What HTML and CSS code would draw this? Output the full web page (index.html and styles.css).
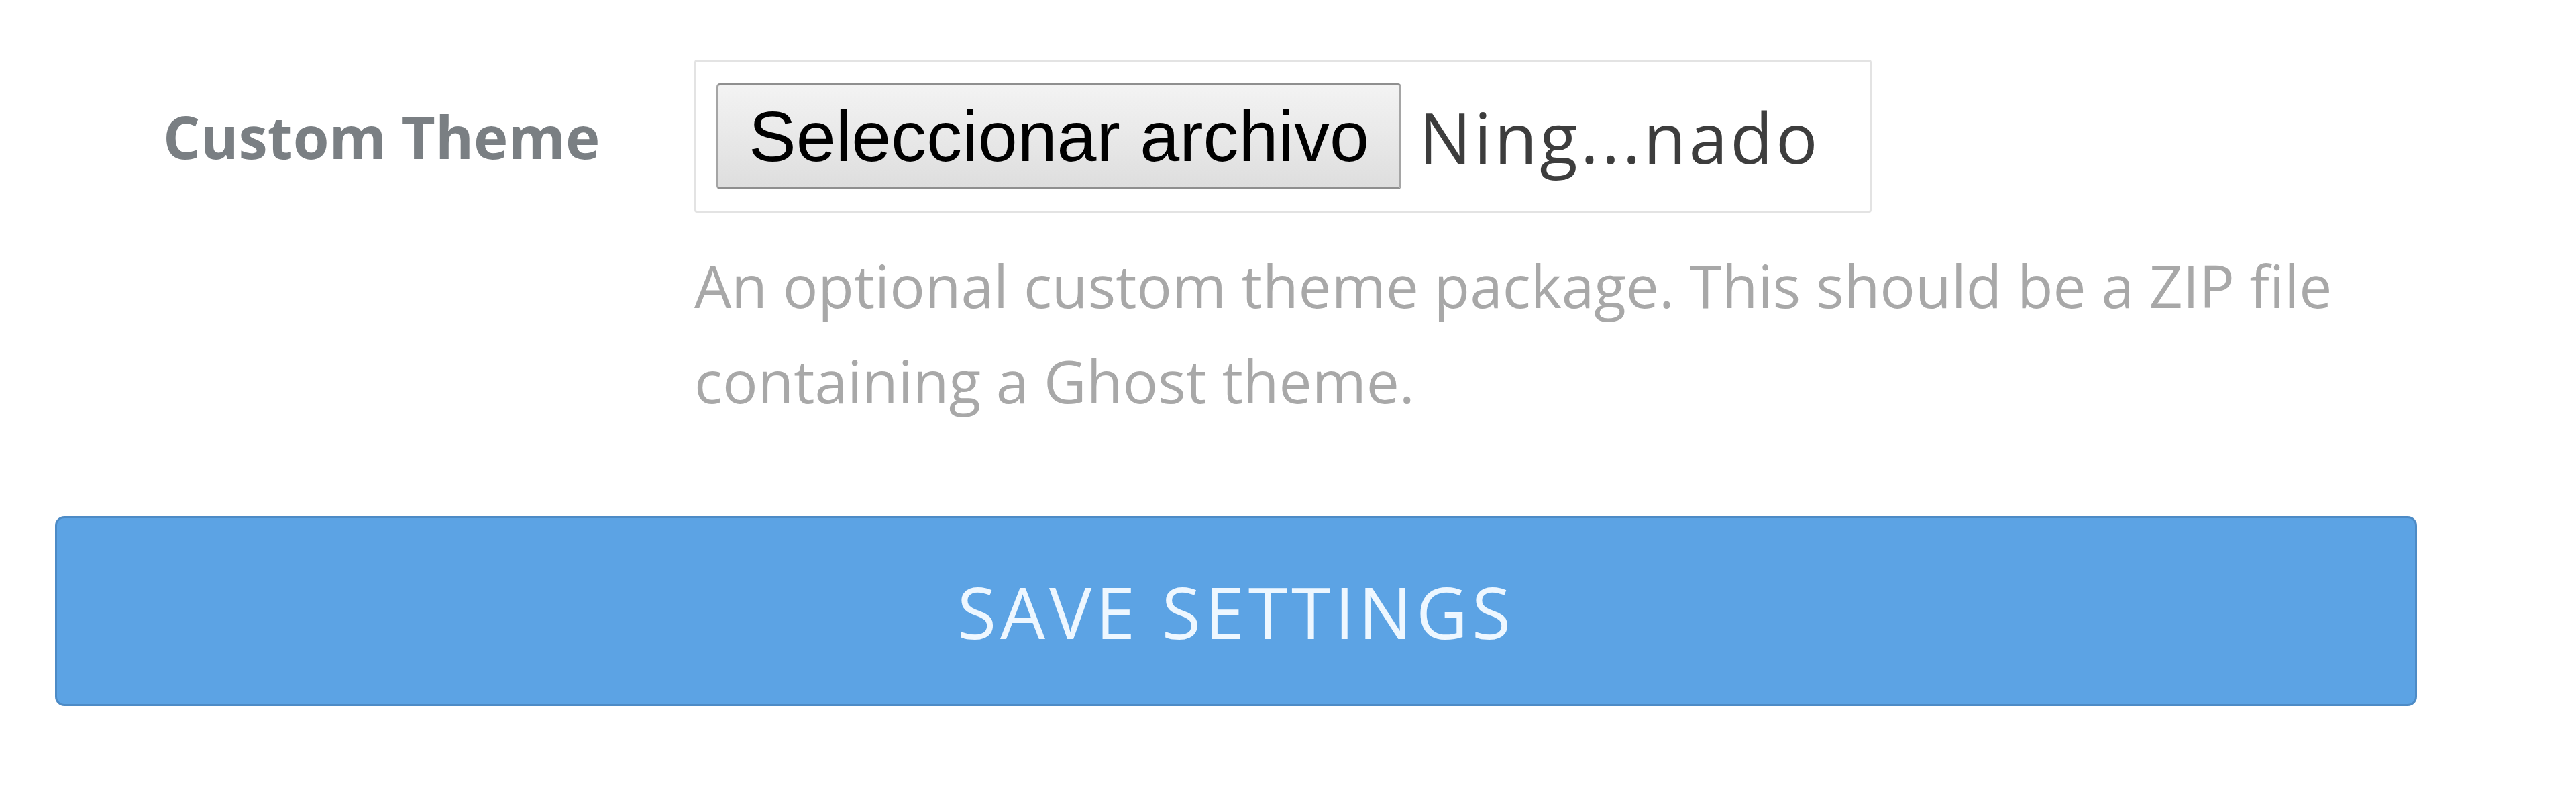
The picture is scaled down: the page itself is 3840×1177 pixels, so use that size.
FILE: index.html
```html
<!DOCTYPE html>
<html lang="en">

<head>
    <meta charset="UTF-8">
    <meta name="viewport" content="width=device-width, initial-scale=1.0">
    <title>Settings</title>
    <link rel="stylesheet" href="styles.css">
</head>

<body>
    <form class="settings">
        <div class="form-group">
            <label class="form-label" for="themeFile">Custom Theme</label>
            <div class="form-field">
                <div class="file-box">
                    <button type="button" class="file-btn">Seleccionar archivo</button>
                    <span class="file-name">Ning...nado</span>
                </div>
                <p class="help">An optional custom theme package. This should be a ZIP file containing a Ghost theme.</p>
            </div>
        </div>
        <button type="button" class="save-btn">Save Settings</button>
    </form>
</body>

</html>
```
FILE: styles.css
```css
body {
    font-family: "Open Sans", sans-serif;
    background-color: #fff;
    margin: 0;
    padding: 0;
}

.settings {
    width: 3521px;
    margin: 0 0 0 82px;
    padding-top: 89px;
}

.form-group {
    display: grid;
    grid-template-columns: 785px 1fr;
    padding-left: 161px;
}

.form-label {
    height: 228px;
    display: flex;
    align-items: center;
    font-size: 87px;
    font-weight: 700;
    color: #7a7f83;
}

.form-field {
    margin-left: 7px;
}

.file-box {
    width: 1755px;
    height: 228px;
    box-sizing: border-box;
    display: flex;
    align-items: center;
    padding: 0 30px;
    border: 3px solid #e3e3e3;
    border-radius: 4px;
}

.file-btn {
    height: 158px;
    padding: 0 45px;
    font-family: "Liberation Sans", Arial, sans-serif;
    font-size: 106px;
    color: #000;
    background: linear-gradient(#f3f3f3, #dedede);
    border: 3px solid #a5a5a5;
    border-top-color: #8f8f8f;
    border-bottom-color: #8f8f8f;
    border-radius: 5px;
}

.file-name {
    margin-left: 26px;
    font-family: "Open Sans", sans-serif;
    font-size: 104px;
    letter-spacing: 4px;
    color: #3d3d3d;
}

.help {
    margin: 37px 0 0;
    font-size: 87.5px;
    line-height: 142px;
    color: #a8a8a8;
}

.save-btn {
    display: block;
    width: 100%;
    height: 283px;
    margin-top: 131px;
    font-family: "Open Sans", sans-serif;
    font-size: 106px;
    letter-spacing: 6px;
    text-transform: uppercase;
    color: #eef7ff;
    background-color: #5ca3e4;
    border: 3px solid #4d8bc6;
    border-radius: 14px;
}
```
